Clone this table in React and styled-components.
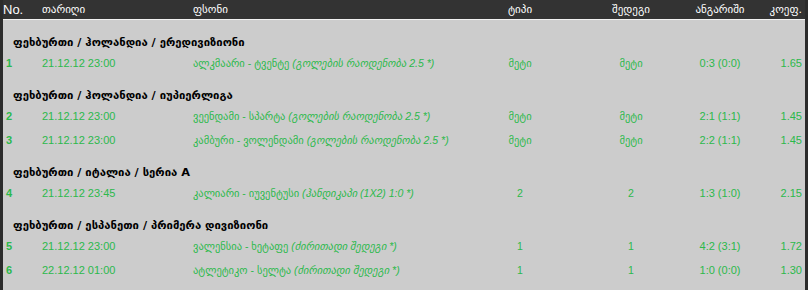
import React from 'react'
import styled, { createGlobalStyle } from 'styled-components'

const GlobalStyle = createGlobalStyle`
    html, body {
        margin: 0;
        padding: 0;
        background: #cccccc;
    }
    body {
        font-family: "Liberation Sans", Arial, "DejaVu Sans", sans-serif;
    }
`

const cols = '39px 151px 277px 100px 122px 56px 54px'

const groups = [
    {
        title: 'ფეხბურთი / ჰოლანდია / ერედივიზიონი',
        rows: [
            { no: 1, date: '21.12.12 23:00', event: 'ალკმაარი - ტვენტე', note: '(გოლების რაოდენობა 2.5 *)', type: 'მეტი', result: 'მეტი', score: '0:3 (0:0)', coef: '1.65' },
        ],
    },
    {
        title: 'ფეხბურთი / ჰოლანდია / იუპიერლიგა',
        rows: [
            { no: 2, date: '21.12.12 23:00', event: 'ვეენდამი - სპარტა', note: '(გოლების რაოდენობა 2.5 *)', type: 'მეტი', result: 'მეტი', score: '2:1 (1:1)', coef: '1.45' },
            { no: 3, date: '21.12.12 23:00', event: 'კამბური - ვოლენდამი', note: '(გოლების რაოდენობა 2.5 *)', type: 'მეტი', result: 'მეტი', score: '2:2 (1:1)', coef: '1.45' },
        ],
    },
    {
        title: 'ფეხბურთი / იტალია / სერია A',
        rows: [
            { no: 4, date: '21.12.12 23:45', event: 'კალიარი - იუვენტუსი', note: '(ჰანდიკაპი (1X2) 1:0 *)', type: '2', result: '2', score: '1:3 (1:0)', coef: '2.15' },
        ],
    },
    {
        title: 'ფეხბურთი / ესპანეთი / პრიმერა დივიზიონი',
        rows: [
            { no: 5, date: '21.12.12 23:00', event: 'ვალენსია - ხეტაფე', note: '(ძირითადი შედეგი *)', type: '1', result: '1', score: '4:2 (3:1)', coef: '1.72' },
            { no: 6, date: '22.12.12 01:00', event: 'ატლეტიკო - სელტა', note: '(ძირითადი შედეგი *)', type: '1', result: '1', score: '1:0 (0:0)', coef: '1.30' },
        ],
    },
]

export default function App() {
    return (
        <>
            <GlobalStyle />
            <Frame>
                <Header>
                    <HeadCell $big>No.</HeadCell>
                    <HeadCell>თარიღი</HeadCell>
                    <HeadCell>ფსონი</HeadCell>
                    <HeadCell $align="center">ტიპი</HeadCell>
                    <HeadCell $align="center">შედეგი</HeadCell>
                    <HeadCell $align="center">ანგარიში</HeadCell>
                    <HeadCell $align="right">კოეფ.</HeadCell>
                </Header>
                <Body>
                    {groups.map((g) => (
                        <Group key={g.title}>
                            <GroupTitle>{g.title}</GroupTitle>
                            {g.rows.map((r) => (
                                <Row key={r.no}>
                                    <Cell $num>{r.no}</Cell>
                                    <Cell>{r.date}</Cell>
                                    <Cell $geo>
                                        {r.event} <Note>{r.note}</Note>
                                    </Cell>
                                    <Cell $geo $align="center">{r.type}</Cell>
                                    <Cell $geo $align="center">{r.result}</Cell>
                                    <Cell $align="center">{r.score}</Cell>
                                    <Cell $align="right">{r.coef}</Cell>
                                </Row>
                            ))}
                        </Group>
                    ))}
                </Body>
            </Frame>
        </>
    )
}

const Frame = styled.div`
    width: 808px;
    height: 290px;
    box-sizing: border-box;
    background: #cccccc;
    border-left: 3px solid #2b2b2b;
    border-right: 3px solid #2b2b2b;
    overflow: hidden;
`

const Header = styled.div`
    display: grid;
    grid-template-columns: ${cols};
    height: 19px;
    align-items: center;
    background: #333333;
    border-bottom: 1px solid #f2f2f2;
    color: #ffffff;
`

const HeadCell = styled.div`
    text-align: ${({ $align }) => $align || 'left'};
    font-family: ${({ $big }) => $big ? '"Liberation Sans", Arial, sans-serif' : '"DejaVu Sans", sans-serif'};
    font-size: ${({ $big }) => $big ? '13px' : '11px'};
    white-space: nowrap;
`

const Body = styled.div`
    display: flex;
    flex-direction: column;
    gap: 12px;
    padding-top: 14px;
`

const Group = styled.div`
    display: flex;
    flex-direction: column;
`

const GroupTitle = styled.div`
    height: 17px;
    line-height: 17px;
    padding-left: 10px;
    font-family: "DejaVu Sans", sans-serif;
    font-weight: bold;
    font-size: 11.3px;
    color: #000000;
    white-space: nowrap;
`

const Row = styled.div`
    display: grid;
    grid-template-columns: ${cols};
    height: 24px;
    align-items: center;
    color: #2bb94b;
`

const Cell = styled.div`
    text-align: ${({ $align }) => $align || 'left'};
    padding-left: ${({ $num }) => $num ? '3px' : '0'};
    font-family: ${({ $geo }) => $geo ? '"Liberation Sans", "DejaVu Sans", sans-serif' : '"Liberation Sans", Arial, sans-serif'};
    font-size: ${({ $geo }) => $geo ? '10.5px' : '11px'};
    font-weight: ${({ $num }) => $num ? 'bold' : 'normal'};
    white-space: nowrap;
`

const Note = styled.span`
    font-style: italic;
`
